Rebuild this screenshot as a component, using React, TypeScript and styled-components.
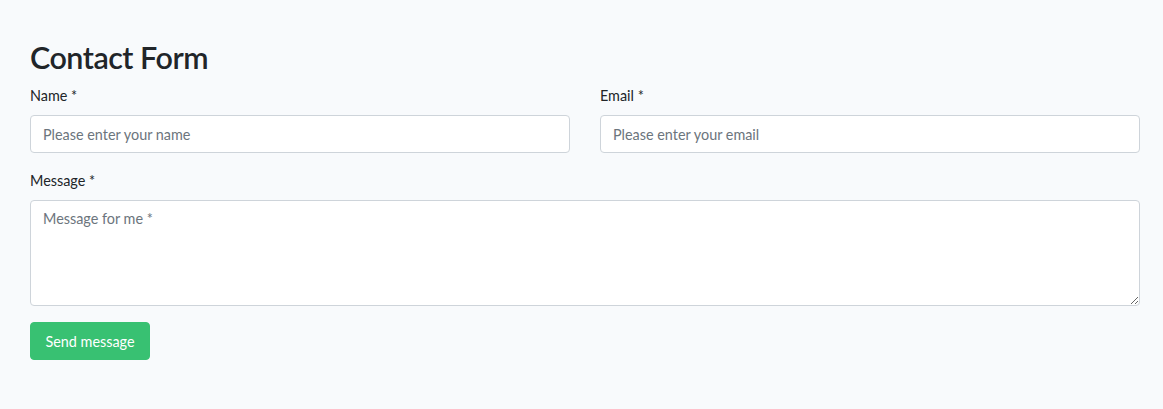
import styled, { createGlobalStyle } from "styled-components";

const GlobalStyle = createGlobalStyle`
  html, body {
    margin: 0;
    padding: 0;
    background: #f8fafc;
  }
  body {
    font-family: "Lato", "Noto Sans", sans-serif;
    font-size: 14.4px;
    line-height: 1.6;
    color: #212529;
  }
  * {
    box-sizing: border-box;
  }
`;

const Page = styled.div`
  padding: 38px 23px 40px 30px;
`;

const Title = styled.h2`
  margin: 0 0 8px;
  font-size: 30.5px;
  font-weight: 600;
  letter-spacing: -0.5px;
  line-height: 38.4px;
  color: #212529;
`;

const Row = styled.div`
  display: grid;
  grid-template-columns: 1fr 1fr;
  column-gap: 30px;
`;

const Group = styled.div`
  display: flex;
  flex-direction: column;
  margin-bottom: 16px;
`;

const Label = styled.label`
  display: block;
  margin-bottom: 8px;
  font-size: 14.4px;
  line-height: 23px;
  color: #212529;
`;

const Input = styled.input`
  display: block;
  width: 100%;
  height: 38px;
  padding: 6px 12px;
  font-family: inherit;
  font-size: 14.4px;
  line-height: 1.6;
  color: #495057;
  background: #fff;
  border: 1px solid #ced4da;
  border-radius: 4px;
  outline: none;

  &::placeholder {
    color: #6c757d;
    opacity: 1;
  }
`;

const TextArea = styled.textarea`
  display: block;
  width: 100%;
  height: 106px;
  padding: 6px 12px;
  font-family: inherit;
  font-size: 14.4px;
  line-height: 1.6;
  color: #495057;
  background: #fff;
  border: 1px solid #ced4da;
  border-radius: 4px;
  outline: none;
  resize: vertical;

  &::placeholder {
    color: #6c757d;
    opacity: 1;
  }
`;

const SendButton = styled.button`
  display: inline-block;
  width: 120px;
  height: 38px;
  padding: 6px 12px;
  font-family: inherit;
  font-size: 14.4px;
  line-height: 1.6;
  color: #fff;
  background: #38c172;
  border: 1px solid #38c172;
  border-radius: 4px;
  cursor: pointer;
`;

export default function App() {
  return (
    <>
      <GlobalStyle />
      <Page>
        <Title>Contact Form</Title>
        <Row>
          <Group>
            <Label htmlFor="name">Name *</Label>
            <Input id="name" type="text" placeholder="Please enter your name" />
          </Group>
          <Group>
            <Label htmlFor="email">Email *</Label>
            <Input id="email" type="email" placeholder="Please enter your email" />
          </Group>
        </Row>
        <Group>
          <Label htmlFor="message">Message *</Label>
          <TextArea id="message" rows={4} placeholder="Message for me *" />
        </Group>
        <SendButton type="submit">Send message</SendButton>
      </Page>
    </>
  );
}
